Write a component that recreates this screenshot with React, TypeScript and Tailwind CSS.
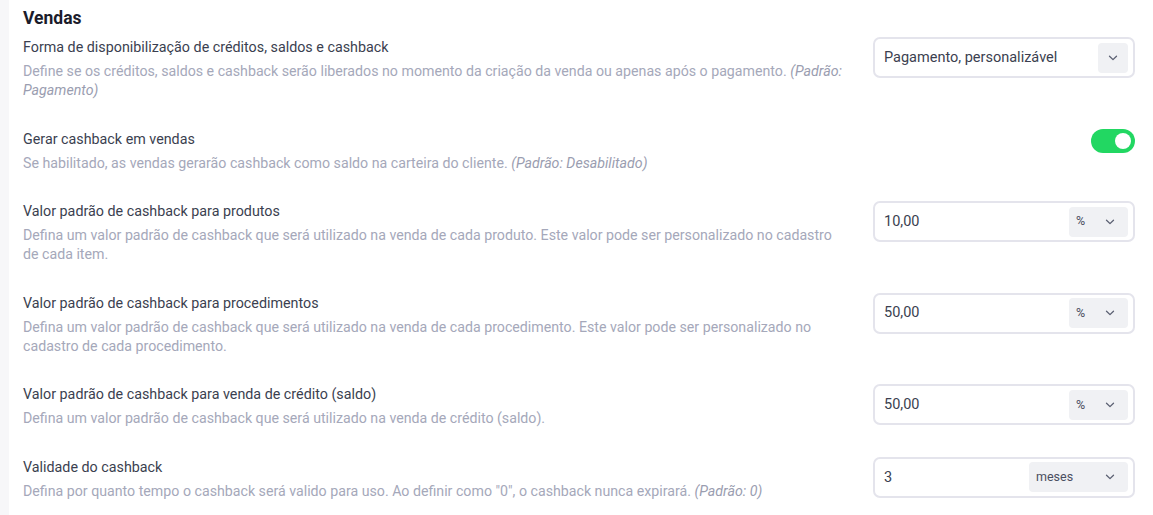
import React from 'react';

const FONT = { fontFamily: 'Roboto, "Liberation Sans", sans-serif' };

function Chevron() {
  return (
    <svg width="10" height="6" viewBox="0 0 10 6" fill="none" className="shrink-0">
      <path d="M1.5 1.2 5 4.6 8.5 1.2" stroke="#5b6072" strokeWidth="1.3" strokeLinecap="round" strokeLinejoin="round" />
    </svg>
  );
}

function Setting({ title, desc, children }: { title: string; desc: React.ReactNode; children: React.ReactNode }) {
  return (
    <div className="flex items-start justify-between gap-[28px]">
      <div className="flex-1 min-w-0 max-w-[824px]">
        <div className="text-[14.3px] leading-[20px] text-[#3b3f50]">{title}</div>
        <div className="mt-[5px] text-[14.2px] leading-[19px] text-[#a5a8ba]">{desc}</div>
      </div>
      <div className="w-[262px] shrink-0 flex justify-end">{children}</div>
    </div>
  );
}

function Padrao({ v }: { v: string }) {
  return <i className="text-[#9a9db0]">(Padrão: {v})</i>;
}

function UnitInput({ value, unit, wide }: { value: string; unit: string; wide?: boolean }) {
  return (
    <div className="w-full h-[41px] flex items-center border-2 border-[#e4e4ec] rounded-[7px] bg-white pl-[9px] pr-[5px]">
      <span className="flex-1 text-[14.5px] text-[#3b3f50]">{value}</span>
      <div className={`${wide ? 'w-[99px]' : 'w-[59px]'} h-[30px] bg-[#f0f1f4] rounded-[4px] flex items-center justify-between pl-[7px] pr-[13px]`}>
        <span className="text-[12.5px] text-[#4a4e60]">{unit}</span>
        <Chevron />
      </div>
    </div>
  );
}

export default function App() {
  return (
    <div className="w-[1153px] h-[515px] bg-white flex overflow-hidden" style={FONT}>
      <div className="w-[9px] shrink-0 bg-[#f7f7f9]" />
      <div className="flex-1 pl-[14px] pr-[18px] pt-[7px]">
        <h2 className="text-[17.5px] leading-[22px] font-bold text-[#1b1c2b]">Vendas</h2>
        <div className="mt-[8px] flex flex-col gap-[28.6px]">
          <Setting
            title="Forma de disponibilização de créditos, saldos e cashback"
            desc={<>Define se os créditos, saldos e cashback serão liberados no momento da criação da venda ou apenas após o pagamento. <Padrao v="Pagamento" /></>}
          >
            <div className="w-full h-[41px] flex items-center border-2 border-[#e4e4ec] rounded-[7px] bg-white pl-[9px] pr-[5px]">
              <span className="flex-1 text-[14.5px] text-[#3b3f50]">Pagamento, personalizável</span>
              <div className="w-[30px] h-[30px] bg-[#f0f1f4] rounded-[4px] flex items-center justify-center">
                <Chevron />
              </div>
            </div>
          </Setting>

          <Setting
            title="Gerar cashback em vendas"
            desc={<>Se habilitado, as vendas gerarão cashback como saldo na carteira do cliente. <Padrao v="Desabilitado" /></>}
          >
            <div className="w-[44px] h-[24px] rounded-full bg-[#22d762] flex items-center justify-end pr-[4px]">
              <div className="w-[16px] h-[16px] rounded-full bg-white" />
            </div>
          </Setting>

          <Setting
            title="Valor padrão de cashback para produtos"
            desc="Defina um valor padrão de cashback que será utilizado na venda de cada produto. Este valor pode ser personalizado no cadastro de cada item."
          >
            <UnitInput value="10,00" unit="%" />
          </Setting>

          <Setting
            title="Valor padrão de cashback para procedimentos"
            desc="Defina um valor padrão de cashback que será utilizado na venda de cada procedimento. Este valor pode ser personalizado no cadastro de cada procedimento."
          >
            <UnitInput value="50,00" unit="%" />
          </Setting>

          <Setting
            title="Valor padrão de cashback para venda de crédito (saldo)"
            desc="Defina um valor padrão de cashback que será utilizado na venda de crédito (saldo)."
          >
            <UnitInput value="50,00" unit="%" />
          </Setting>

          <Setting
            title="Validade do cashback"
            desc={<>Defina por quanto tempo o cashback será valido para uso. Ao definir como "0", o cashback nunca expirará. <Padrao v="0" /></>}
          >
            <UnitInput value="3" unit="meses" wide />
          </Setting>
        </div>
      </div>
    </div>
  );
}
